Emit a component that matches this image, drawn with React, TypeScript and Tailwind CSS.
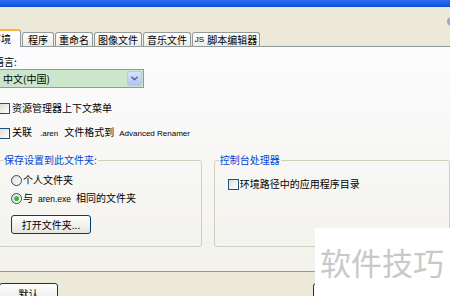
import React from "react";

function Check({ className = "" }: { className?: string }) {
  return (
    <span
      className={`block w-[11px] h-[11px] shrink-0 border border-[#1C5180] bg-linear-to-br from-[#DCDCD7] to-white ${className}`}
    />
  );
}

function Radio({ checked = false }: { checked?: boolean }) {
  return (
    <span className="flex items-center justify-center w-[11px] h-[11px] shrink-0 rounded-full border border-[#1C5180] bg-linear-to-br from-[#DCDCD7] to-white">
      {checked && <span className="block w-[5px] h-[5px] rounded-full bg-linear-to-br from-[#55D855] to-[#1E9E1E]" />}
    </span>
  );
}

function Sp({ w = "w-[6px]" }: { w?: string }) {
  return <span className={`inline-block ${w}`} />;
}

export default function App() {
  const tabs = [
    { t: "程序", w: "w-[32px]" },
    { t: "重命名", w: "w-[38px]" },
    { t: "图像文件", w: "w-[48px]" },
    { t: "音乐文件", w: "w-[48px]" },
    { t: "JS 脚本编辑器", w: "w-[68px]" },
  ];
  return (
    <div className="relative w-[450px] h-[296px] overflow-hidden bg-[#ECE9D8] text-black text-[10px] leading-[12px] font-['Noto_Sans_CJK_SC',sans-serif]">
      {/* title bar strip */}
      <div className="h-[7px] bg-linear-to-b from-[#2C6EF2] to-[#0A4EDF]" />
      {/* beige header */}
      <div className="h-[22px] flex justify-end">
        <div className="mt-[10px] mr-[-6px] w-[9px] h-[9px] rounded-full bg-[#9AAAD0]" />
      </div>
      {/* tab row */}
      <div className="relative z-10 h-[17px] flex items-end gap-[1px] ml-[-16px]">
        <div className="h-[18px] mb-[-1px] w-[37px] pl-[6px] flex items-center rounded-t-[3px] border border-b-0 border-[#919B9C] border-t-2 border-t-[#F7B33D] bg-[#FCFCFE]">
          环境
        </div>
        {tabs.map((tb) => (
          <div
            key={tb.t}
            className={`${tb.w} h-[14px] flex items-center justify-center whitespace-nowrap rounded-t-[3px] border border-b-0 border-[#919B9C] bg-linear-to-b from-white to-[#ECEBE6]`}
          >
            {tb.t.startsWith("JS") ? (
              <>
                <span className="text-[8px] font-['Liberation_Sans',sans-serif] mr-[3px]">JS</span>脚本编辑器
              </>
            ) : (
              tb.t
            )}
          </div>
        ))}
      </div>
      {/* panel */}
      <div className="h-[226px] border-t border-b border-[#919B9C] bg-linear-to-b from-[#FCFCFE] to-[#F3F2EC] flex flex-col">
        <div className="mt-[9px] ml-[-6px]">语言:</div>
        <div className="mt-[1px] ml-[-1px] w-[145px] h-[19px] border border-[#7F9DB9] bg-[#CBE6CB] flex items-center">
          <span className="pl-[3px] flex-1">中文(中国)</span>
          <span className="w-[15px] h-[15px] mr-[1px] rounded-[2px] border border-[#BAC8EB] bg-linear-to-b from-[#D6E2FC] to-[#B2C6F5] flex items-center justify-center">
            <svg width="7" height="5" viewBox="0 0 7 5">
              <path d="M0.5 0.8 L3.5 3.8 L6.5 0.8" fill="none" stroke="#4D6185" strokeWidth="1.4" />
            </svg>
          </span>
        </div>
        <div className="mt-[14px] ml-[-1px] h-[12px] flex items-center gap-[2px]">
          <Check />
          <span>资源管理器上下文菜单</span>
        </div>
        <div className="mt-[13px] ml-[-1px] h-[12px] flex items-center gap-[2px]">
          <Check />
          <span className="whitespace-nowrap">
            关联
            <Sp w="w-[8px]" />
            <span className="text-[8px] font-['Liberation_Sans',sans-serif]">.aren</span>
            <Sp w="w-[6px]" />
            文件格式到
            <Sp w="w-[5px]" />
            <span className="text-[8px] font-['Liberation_Sans',sans-serif]">Advanced Renamer</span>
          </span>
        </div>
        <div className="mt-[15px] flex items-start">
          <fieldset className="ml-[-2px] w-[207px] h-[93px] border border-[#D0D0BF] rounded-[3px]">
            <legend className="ml-[4px] px-[1px] text-[#0046D5]">保存设置到此文件夹:</legend>
            <div className="pl-[12px] flex flex-col">
              <div className="mt-[8px] h-[12px] flex items-center gap-[1px]">
                <Radio />
                <span>个人文件夹</span>
              </div>
              <div className="mt-[6px] h-[12px] flex items-center gap-[1px]">
                <Radio checked />
                <span className="whitespace-nowrap">
                  与
                  <Sp w="w-[5px]" />
                  <span className="text-[8.5px] font-['Liberation_Sans',sans-serif]">aren.exe</span>
                  <Sp w="w-[5px]" />
                  相同的文件夹
                </span>
              </div>
              <button className="mt-[11px] w-[80px] h-[19px] rounded-[3px] border border-[#003C74] bg-linear-to-b from-white to-[#E6E5DE] flex items-center justify-center">
                打开文件夹...
              </button>
            </div>
          </fieldset>
          <fieldset className="ml-[12px] w-[240px] h-[93px] border border-[#D0D0BF] rounded-[3px]">
            <legend className="ml-[4px] px-[1px] text-[#0046D5]">控制台处理器</legend>
            <div className="pl-[13px] mt-[12px] h-[12px] flex items-center gap-[1px]">
              <Check />
              <span>环境路径中的应用程序目录</span>
            </div>
          </fieldset>
        </div>
      </div>
      {/* bottom buttons */}
      <div className="flex items-start">
        <button className="mt-[11px] ml-[-1px] w-[59px] h-[22px] rounded-[3px] border border-[#003C74] bg-linear-to-b from-white to-[#E6E5DE] flex justify-center pt-[4px]">
          默认
        </button>
        <button className="mt-[11px] ml-[255px] w-[75px] h-[22px] rounded-[3px] border border-[#003C74] bg-linear-to-b from-white to-[#E6E5DE]" />
      </div>
      {/* watermark overlay */}
      <div className="absolute left-[315px] top-[228px] w-[135px] h-[68px] bg-white">
        <div className="mt-[18px] ml-[5px] text-[31px] leading-[31px] text-[#C9C9C9] whitespace-nowrap">软件技巧</div>
      </div>
    </div>
  );
}
